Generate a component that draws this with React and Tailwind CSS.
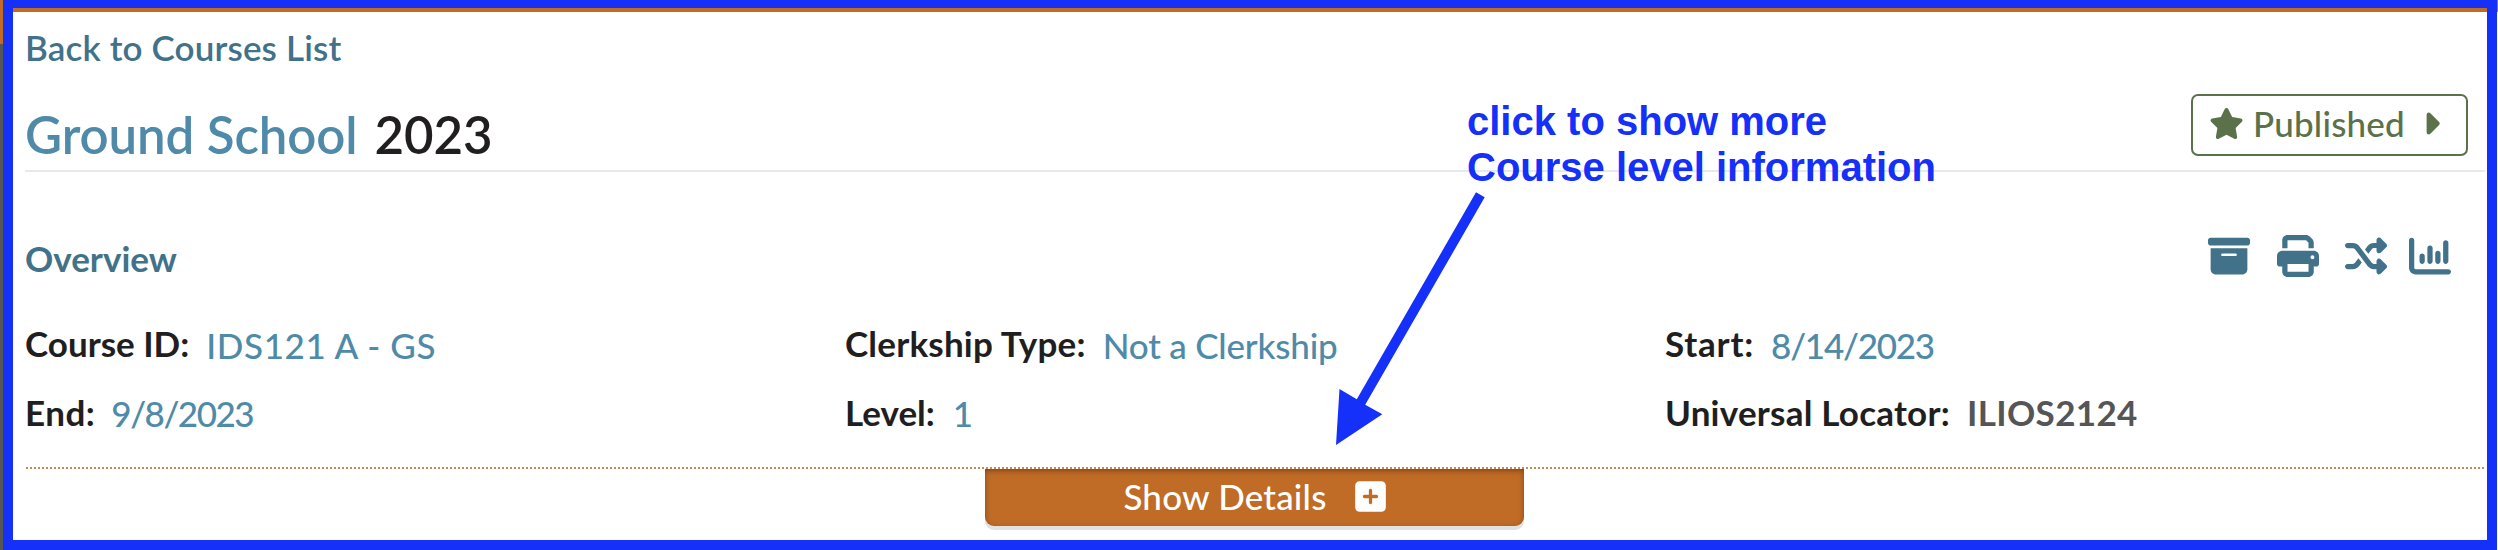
import React from "react";
import {
  FaBoxArchive,
  FaPrint,
  FaShuffle,
  FaChartColumn,
  FaStar,
  FaCaretRight,
  FaSquarePlus,
} from "react-icons/fa6";

function Field({ label, labelClass = "", value, valueClass }) {
  return (
    <div className="flex items-start">
      <span className={`font-bold text-[#211e1f] ${labelClass}`}>{label}</span>
      <span className={valueClass}>{value}</span>
    </div>
  );
}

export default function App() {
  return (
    <div className="relative flex h-[550px] w-[2498px] overflow-hidden whitespace-nowrap bg-white font-['Lato','Liberation_Sans',sans-serif] text-[35px] leading-[42px]">
      <div className="flex w-[3px] flex-col">
        <div className="h-[44px] bg-[#c06c26]" />
        <div className="flex-1 bg-[#555555]" />
      </div>

      <main className="flex w-[2494px] flex-col border-x-[10px] border-t-[8px] border-b-[10px] border-[#1430f9] bg-white">
        <div className="h-[4px] shrink-0 bg-[#c06c26]" />

        <a className="mt-[14px] ml-[12px] self-start font-semibold tracking-[0.15px] text-[#41728a]">
          Back to Courses List
        </a>

        <header className="ml-[12px] flex h-[104px] w-[2460px] items-start justify-between border-b-2 border-[#e6eaea]">
          <h1 className="mt-[36px] flex text-[51px] leading-[62px] font-semibold">
            <span className="tracking-[-0.1px] text-[#4f8ba8]">Ground School</span>
            <span className="ml-[17px] tracking-[-0.1px] text-[#211e1f]">2023</span>
          </h1>
          <button className="mt-[26px] mr-[17px] flex h-[62px] w-[277px] items-center rounded-[7px] border-2 border-[#5a7149] pl-[16px] text-[#5a7149]">
            <FaStar className="-mt-[3px] h-[31px] w-[35px]" />
            <span className="-mt-[4px] ml-[9px] font-medium tracking-[0.2px]">Published</span>
            <FaCaretRight className="-mt-[3px] ml-[15px] h-[35px] w-[22px]" />
          </button>
        </header>

        <section className="mt-[63px] ml-[12px] flex h-[47px] w-[2460px] items-start justify-between">
          <h2 className="mt-[2px] font-bold text-[#41728a]">Overview</h2>
          <div className="mr-[34px] flex text-[#41728a]">
            <FaBoxArchive className="size-[42px]" />
            <FaPrint className="ml-[27px] size-[42px]" />
            <FaShuffle className="ml-[26px] size-[42px]" />
            <FaChartColumn className="ml-[22px] size-[42px]" />
          </div>
        </section>

        <section className="mt-[40px] ml-[12px] grid w-[2460px] grid-cols-3 gap-y-[25px]">
          <Field label="Course ID:" value="IDS121 A - GS" valueClass="ml-[17px] mt-[2px] font-medium tracking-[0.6px] text-[#4f8ba8]" />
          <Field label="Clerkship Type:" labelClass="tracking-[0.2px]" value="Not a Clerkship" valueClass="ml-[17px] mt-[2px] font-medium tracking-[-0.2px] text-[#4f8ba8]" />
          <Field label="Start:" labelClass="tracking-[0.8px]" value="8/14/2023" valueClass="ml-[17px] mt-[2px] font-medium tracking-[-1.25px] text-[#4f8ba8]" />
          <Field label="End:" labelClass="tracking-[0.5px]" value="9/8/2023" valueClass="ml-[16px] mt-[1px] font-medium tracking-[-1.5px] text-[#4f8ba8]" />
          <Field label="Level:" value="1" valueClass="ml-[18px] mt-[1px] font-medium text-[#4f8ba8]" />
          <Field label="Universal Locator:" labelClass="tracking-[0.23px]" value="ILIOS2124" valueClass="ml-[17px] font-bold tracking-[0.35px] text-[#555555]" />
        </section>

        <svg className="mt-[33px] ml-[13px] h-[2px] w-[2459px] shrink-0" viewBox="0 0 2459 2">
          <path d="M0 1H2459" stroke="#c98c50" strokeWidth="2" strokeDasharray="2 2" shapeRendering="crispEdges" />
        </svg>

        <button className="ml-[972px] flex h-[57px] w-[539px] shrink-0 items-start justify-center rounded-b-[9px] bg-[#c06c26] pt-[5px] text-white shadow-[0_4px_0_#e2e2e2,inset_0_2px_6px_-1px_rgba(60,30,10,0.6)]">
          <span className="mt-[1px] font-medium tracking-[0.2px]">Show Details</span>
          <FaSquarePlus className="mt-[5px] ml-[28px] h-[35px] w-[31px]" />
        </button>
      </main>

      <div className="w-[1px]">
        <div className="h-[12px] bg-[#c06c26]" />
      </div>

      <p className="absolute top-[98px] left-[1467px] font-['Liberation_Sans',Arial,sans-serif] text-[40px] leading-[46px] font-bold text-[#1430f9]">
        click to show more
        <br />
        Course level information
      </p>
      <svg className="absolute top-[190px] left-[1330px] h-[260px] w-[160px]" viewBox="1330 190 160 260">
        <path d="M1476 192.3L1484.7 197.3L1365.2 404.7L1382.3 414.3L1336 445L1339.5 389L1356.8 399.3Z" fill="#1430f9" />
      </svg>
    </div>
  );
}
